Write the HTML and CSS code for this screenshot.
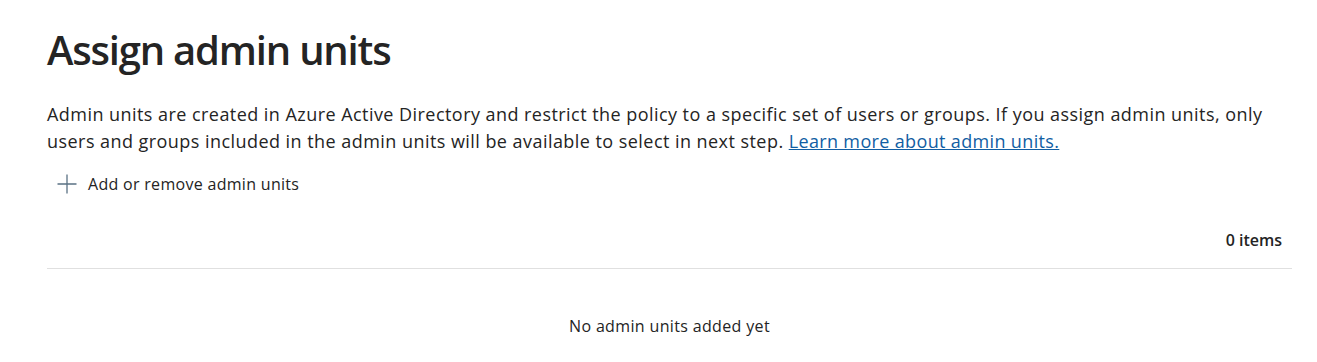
FILE: index.html
```html
<!DOCTYPE html>
<html lang="en">
<head>
<meta charset="utf-8">
<title>Assign admin units</title>
<link rel="stylesheet" href="styles.css">
</head>
<body>
<main class="page">
  <h1 class="title">Assign admin units</h1>
  <p class="desc">Admin units are created in Azure Active Directory and restrict the policy to a specific set of users or groups. If you assign admin units, only users and groups included in the admin units will be available to select in next step. <a href="#" class="link">Learn more about admin units.</a></p>
  <button class="add-btn" type="button">
    <svg class="add-icon" width="20" height="20" viewBox="0 0 20 20" aria-hidden="true"><path d="M10 0.5v19M0.5 10h19" stroke="#5a7184" stroke-width="1.3" fill="none"/></svg>
    <span>Add or remove admin units</span>
  </button>
  <div class="count-row"><span class="count">0 items</span></div>
  <div class="empty">No admin units added yet</div>
</main>
</body>
</html>
```
FILE: styles.css
```css
html, body { margin: 0; padding: 0; background: #fff; }
body {
  font-family: "Open Sans", "Noto Sans", "Liberation Sans", sans-serif;
  color: #242424;
}
.page {
  padding: 14px 25px 0 47px;
}
.title {
  margin: 0;
  font-size: 40px;
  font-weight: 600;
  line-height: 72px;
  letter-spacing: -1.2px;
}
.desc {
  margin: 15px 0 0;
  font-size: 18px;
  line-height: 27px;
  letter-spacing: 0.45px;
  padding-right: 20px;
}
.link { color: #115ea3; text-decoration: underline; letter-spacing: 0.35px; }
.add-btn {
  display: flex;
  align-items: center;
  gap: 11px;
  margin: 13px 0 0 10px;
  padding: 0;
  border: 0;
  background: none;
  font: inherit;
  font-size: 16px;
  letter-spacing: 0.3px;
  color: #242424;
  height: 32px;
  cursor: pointer;
}
.count-row {
  display: flex;
  justify-content: flex-end;
  margin-top: 29px;
  padding: 0 10px 17px 0;
  line-height: 22px;
  border-bottom: 1px solid #e0e0e0;
}
.count { font-size: 16px; font-weight: 600; }
.empty {
  text-align: center;
  font-size: 16px;
  letter-spacing: 0.35px;
  margin-top: 46px;
  line-height: 22px;
}
```
